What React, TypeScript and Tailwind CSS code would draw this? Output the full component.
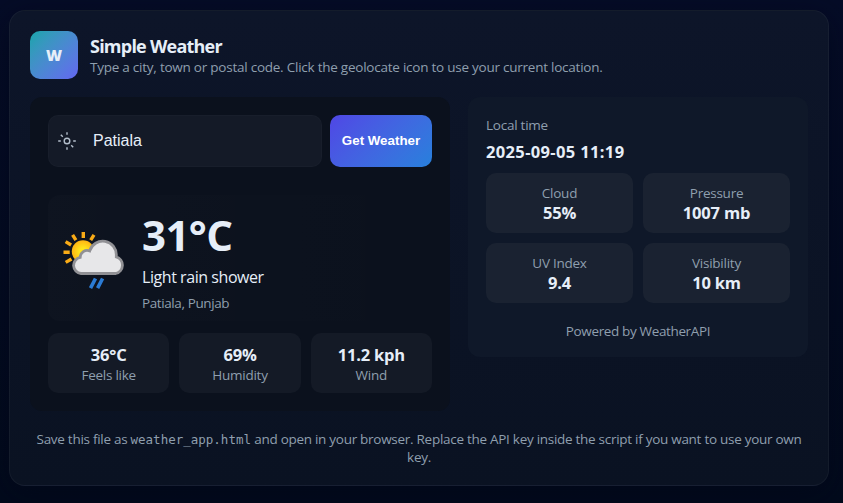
import React from "react";

function Metric({ first, second, strongFirst }: { first: string; second: string; strongFirst?: boolean }) {
  const strong = "text-[16.5px] leading-5 font-bold text-[#e6eef8] tracking-[-0.2px]";
  const muted = "text-[13.5px] leading-5 text-[#8f9fae] tracking-[-0.25px]";
  return (
    <div
      className={
        "flex h-[60px] flex-1 flex-col items-center whitespace-nowrap rounded-[10px] " +
        (strongFirst ? "bg-[#141a26] pt-3" : "bg-[#1a2231] pt-[10px]")
      }
    >
      <div className={strongFirst ? strong : muted}>{first}</div>
      <div className={strongFirst ? muted : strong}>{second}</div>
    </div>
  );
}

function LocateIcon() {
  return (
    <svg width="20" height="20" viewBox="0 0 20 20" fill="none" stroke="#b4bfcc" strokeWidth="1.4">
      <circle cx="10" cy="10" r="2.8" />
      <path d="M10 1.2v2.6M10 16.2v2.6M1.2 10h2.6M16.2 10h2.6M3.8 3.8l2 2M14.2 14.2l2 2" />
    </svg>
  );
}

function WeatherIcon() {
  return (
    <svg width="64" height="64" viewBox="0 0 64 64" fill="none">
      <defs>
        <radialGradient id="sun">
          <stop offset="0.3" stopColor="#ffe51c" />
          <stop offset="1" stopColor="#ffb514" />
        </radialGradient>
      </defs>
      <g stroke="#f9ab16" strokeWidth="3.4">
        <path d="M21.3 6v6M10.6 8.8l3.3 5.3M32 8.8l-3.3 5.3M3.6 15.6l5.5 3.4M1.5 26.2h6.2M3.7 36.4l5.8-3.4" />
      </g>
      <circle cx="21" cy="25.5" r="11.2" fill="url(#sun)" />
      <path
        d="M19 47.5a8.2 8.2 0 0 1-.8-16.2 7 7 0 0 1 9.5-6.4 13.6 13.6 0 0 1 26.6 4.8v1.2A8.6 8.6 0 0 1 53.8 47.5Z"
        fill="#e7e7e9"
        stroke="#919195"
        strokeWidth="2.8"
      />
      <path d="M33.5 52.5l-5 9.6M40.6 52.5l-5 9.6" stroke="#2b7bd4" strokeWidth="3.6" />
    </svg>
  );
}

export default function App() {
  return (
    <div className="h-[503px] w-[843px] overflow-hidden bg-linear-to-b from-[#050c27] to-[#020a1c] pl-[9px] pt-[10px] font-['Open_Sans','Noto_Sans',sans-serif]">
      <main className="h-[476px] w-[820px] rounded-2xl border border-white/[0.045] bg-linear-to-b from-[#0d1529] to-[#0a1222] p-5 shadow-[0_8px_30px_rgba(2,6,23,0.6)]">
        <header className="flex h-12 items-center gap-3">
          <div className="flex size-12 items-center justify-center rounded-[10px] bg-linear-135 from-[#12a5ab] to-[#6366f1] pt-px text-[15.5px] font-extrabold text-[#e6eef8]">
            W
          </div>
          <div className="whitespace-nowrap">
            <h1 className="pt-[2px] text-[18px] leading-[21px] font-bold tracking-[-0.77px] text-[#e6eef8]">Simple Weather</h1>
            <p className="text-[13.5px] leading-5 tracking-[-0.24px] text-[#8f9fae]">
              Type a city, town or postal code. Click the geolocate icon to use your current location.
            </p>
          </div>
        </header>

        <div className="mt-[18px] flex items-start gap-[18px]">
          <section className="h-[314px] w-[420px] rounded-xl bg-[#0b111d] p-[18px]">
            <div className="flex gap-2">
              <div className="flex h-[52px] w-[274px] items-center gap-4 rounded-[10px] border border-white/[0.02] bg-[#141a27] pl-2 text-[16px] text-[#e6eef8]">
                <LocateIcon />
                <span className="font-['Liberation_Sans',Arial,sans-serif]">Patiala</span>
              </div>
              <button className="h-[52px] w-[102px] whitespace-nowrap rounded-[10px] bg-linear-135 from-[#4f46e5] to-[#2680dc] font-['Liberation_Sans',Arial,sans-serif] text-[13.33px] font-bold text-white">
                Get Weather
              </button>
            </div>
            <div className="mt-7 flex h-[126px] items-center gap-4 rounded-xl bg-linear-to-r from-white/[0.012] to-transparent pl-[14px]">
              <WeatherIcon />
              <div className="whitespace-nowrap pt-[7px]">
                <div className="text-[42px] leading-[47px] font-bold tracking-[-0.6px] text-[#e6eef8]">31°C</div>
                <div className="mt-[7px] text-[16px] leading-6 tracking-[-0.44px] text-[#e6eef8]">Light rain shower</div>
                <div className="mt-1 text-[13.5px] leading-5 tracking-[-0.4px] text-[#8f9fae]">Patiala, Punjab</div>
              </div>
            </div>
            <div className="mt-3 flex gap-[10px]">
              <Metric first="36°C" second="Feels like" strongFirst />
              <Metric first="69%" second="Humidity" strongFirst />
              <Metric first="11.2 kph" second="Wind" strongFirst />
            </div>
          </section>

          <aside className="h-[260px] w-[340px] rounded-xl bg-[#0f1829] p-[18px]">
            <div className="text-[13.5px] leading-5 tracking-[-0.24px] text-[#8f9fae]">Local time</div>
            <div className="mt-[7px] text-[16.5px] leading-5 font-bold tracking-[0.35px] text-[#e6eef8]">2025-09-05 11:19</div>
            <div className="mt-[11px] flex gap-[10px]">
              <Metric first="Cloud" second="55%" />
              <Metric first="Pressure" second="1007 mb" />
            </div>
            <div className="mt-[10px] flex gap-[10px]">
              <Metric first="UV Index" second="9.4" />
              <Metric first="Visibility" second="10 km" />
            </div>
            <div className="mt-[18px] text-center text-[13.5px] leading-5 tracking-[-0.36px] text-[#8f9fae]">Powered by WeatherAPI</div>
          </aside>
        </div>

        <footer className="mt-[19px] whitespace-nowrap text-center text-[13.5px] leading-[18px] tracking-[-0.28px] text-[#8f9fae]">
          Save this file as{" "}
          <code className="font-['DejaVu_Sans_Mono',monospace] text-[12.5px] leading-none tracking-normal">weather_app.html</code>{" "}
          and open in your browser. Replace the API key inside the script if you want to use your own
          <br />
          key.
        </footer>
      </main>
    </div>
  );
}
